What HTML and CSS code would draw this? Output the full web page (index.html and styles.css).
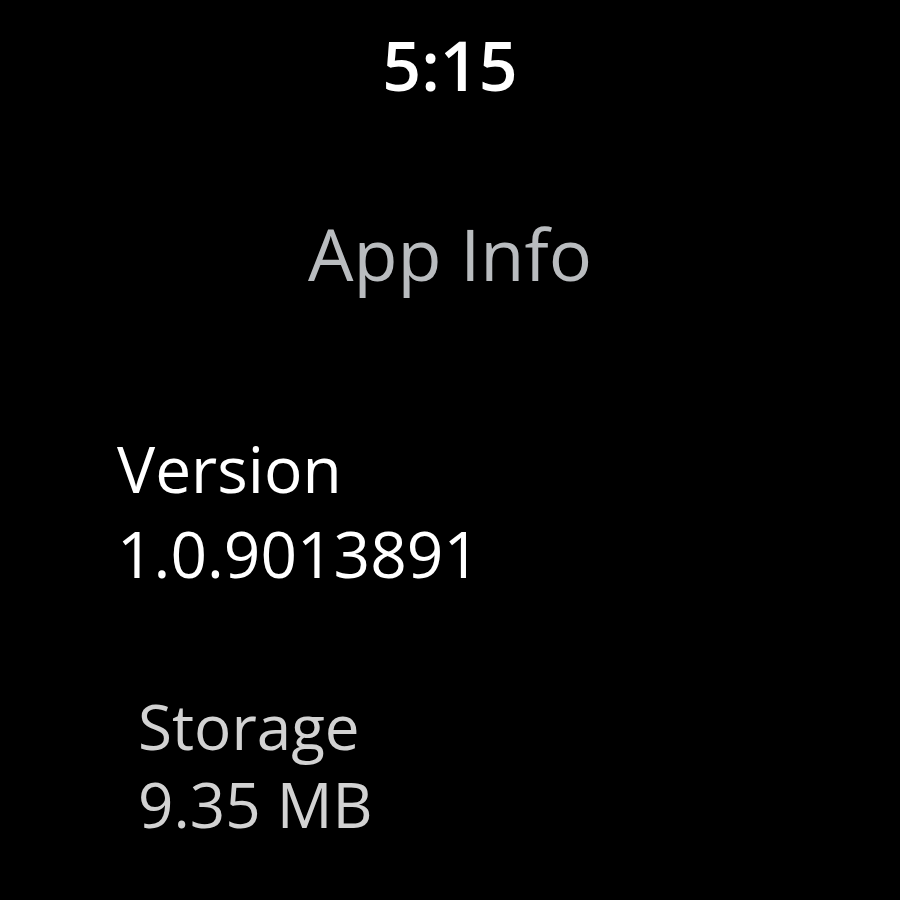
FILE: index.html
```html
<!DOCTYPE html>
<html lang="en">
<head>
    <meta charset="UTF-8">
    <title>App Info</title>
    <link rel="stylesheet" href="styles.css">
</head>
<body>
<div class="screen">
    <div class="clock">5:15</div>
    <h1 class="title">App Info</h1>
    <ul class="info_list">
        <li class="info_item">
            <div class="label">Version</div>
            <div class="value">1.0.9013891</div>
        </li>
        <li class="info_item info_item--far">
            <div class="label">Storage</div>
            <div class="value">9.35 MB</div>
        </li>
    </ul>
</div>
</body>
</html>
```

FILE: styles.css
```css
body {
    margin: 0;
    background: #000;
    font-family: "Open Sans", "Liberation Sans", sans-serif;
}

.screen {
    width: 900px;
    height: 900px;
    overflow: hidden;
    display: flex;
    flex-direction: column;
}

.clock {
    text-align: center;
    color: #fff;
    font-size: 68px;
    font-weight: 600;
    line-height: 80px;
    margin-top: 25px;
}

.title {
    text-align: center;
    color: #b9bcbf;
    font-size: 72px;
    font-weight: 400;
    line-height: 80px;
    margin: 108px 0 0 0;
}

.info_list {
    list-style: none;
    margin: 133px 0 0 0;
    padding: 0 0 0 117px;
}

.info_item {
    color: #fff;
    font-size: 64px;
    line-height: 85px;
}

.info_item--far {
    color: #d2d2d2;
    font-size: 62px;
    line-height: 78px;
    margin: 91px 0 0 21px;
}
```
